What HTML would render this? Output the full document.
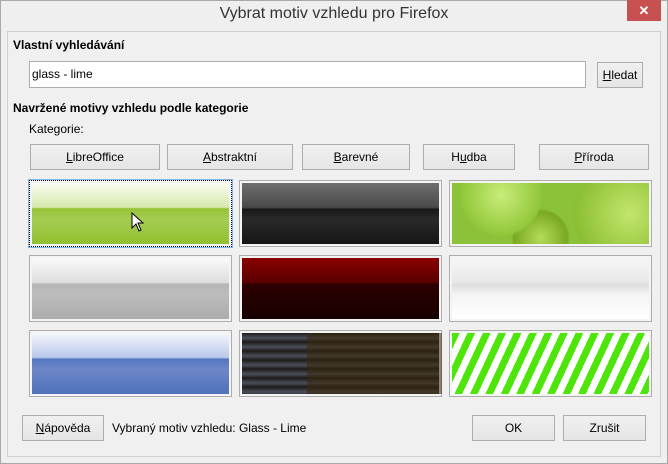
<!DOCTYPE html>
<html><head><meta charset="utf-8"><style>
*{margin:0;padding:0;box-sizing:border-box}
body{width:668px;height:464px;background:#f0f0f0;font-family:"Segoe UI","Liberation Sans",sans-serif;font-size:12px;color:#000;position:relative;overflow:hidden}
.win{position:absolute;left:0;top:0;width:668px;height:464px;border:1px solid #a8a8a8;background:#efefef}
.title{position:absolute;left:0;top:5px;width:668px;text-align:center;font-size:16px;color:#333}
.close{position:absolute;left:627px;top:0;width:34px;height:21px;background:#c75050;color:#fff;text-align:center;font-size:13px;line-height:21px;font-weight:bold}
.panel{position:absolute;left:7px;top:31px;width:654px;height:426px;border:1px solid #d0d0d0;background:#f0f0f0}
.a{position:absolute;white-space:nowrap}
.b{font-weight:bold}
.btn{position:absolute;border:1px solid #adadad;background:linear-gradient(#f0f0f0,#e5e5e5);text-align:center;line-height:24px;height:26px}
.inp{position:absolute;left:29px;top:61px;width:557px;height:27px;border:1px solid #abadb3;background:#fff;padding-left:2px;line-height:25px}
.t{position:absolute;width:203px;height:67px;border:1px solid #adadad;padding:2px;background:#f4f4f4}
.t div{width:100%;height:100%}
</style></head><body>
<div class="win"></div>
<div class="title">Vybrat motiv vzhledu pro Firefox</div>
<div class="close">✕</div>
<div class="panel"></div>
<div class="a b" style="left:13px;top:38px">Vlastní vyhledávání</div>
<div class="inp">glass - lime</div>
<div class="btn" style="left:597px;top:62px;width:46px"><u>H</u>ledat</div>
<div class="a b" style="left:13px;top:101px">Navržené motivy vzhledu podle kategorie</div>
<div class="a" style="left:29px;top:122px">Kategorie:</div>
<div class="btn" style="left:30px;top:144px;width:130px"><u>L</u>ibreOffice</div>
<div class="btn" style="left:167px;top:144px;width:126px"><u>A</u>bstraktní</div>
<div class="btn" style="left:302px;top:144px;width:108px"><u>B</u>arevné</div>
<div class="btn" style="left:423px;top:144px;width:92px">H<u>u</u>dba</div>
<div class="btn" style="left:539px;top:144px;width:110px"><u>P</u>říroda</div>

<div class="t" style="left:29px;top:180px;border:1px dotted #000;outline:1px solid #7eb4ea"><div style="background:linear-gradient(#fbfdf4,#d5e8a9 40%,#97c337 42%,#a4cd52 60%,#93bf2f)"></div></div>
<div class="t" style="left:239px;top:180px"><div style="background:linear-gradient(#6e6e6e,#4a4a4a 40%,#181818 43%,#2a2a2a 60%,#151515)"></div></div>
<div class="t" style="left:449px;top:180px"><div style="background:radial-gradient(circle at 25% 20%,#c9ec7a 0,#93c83a 25%,transparent 27%),radial-gradient(circle at 90% 50%,#c2e56c 0,#8cbf32 30%,transparent 32%),radial-gradient(circle at 45% 90%,#b5dc5a 0,#79a821 22%,transparent 24%),#8cc13a"></div></div>

<div class="t" style="left:29px;top:255px"><div style="background:linear-gradient(#fafafa,#dedede 40%,#b5b5b5 43%,#bcbcbc 60%,#acacac)"></div></div>
<div class="t" style="left:239px;top:255px"><div style="background:linear-gradient(#8a0000,#5a0000 40%,#2e0000 43%,#260000 60%,#170000)"></div></div>
<div class="t" style="left:449px;top:255px"><div style="background:linear-gradient(#f6f6f6,#e8e8e8 40%,#dcdcdc 43%,#f4f4f4 60%,#fff)"></div></div>

<div class="t" style="left:29px;top:330px"><div style="background:linear-gradient(#f4f6fc,#bac8ea 40%,#5676be 43%,#6d87c8 60%,#5071bd)"></div></div>
<div class="t" style="left:239px;top:330px"><div style="background:repeating-linear-gradient(#1c1c1c 0,#4a4f58 5px,#1c1c1c 9px),#222;position:relative"><div style="position:absolute;left:65px;top:0;width:135px;height:100%;background:rgba(60,40,10,.55)"></div></div></div>
<div class="t" style="left:449px;top:330px"><div style="background:repeating-linear-gradient(115deg,#4ee60a 0,#4ee60a 7px,#fff 7px,#fff 14px)"></div></div>

<div class="btn" style="left:22px;top:415px;width:82px"><u>N</u>ápověda</div>
<div class="a" style="left:112px;top:421px">Vybraný motiv vzhledu: Glass - Lime</div>
<div class="btn" style="left:472px;top:415px;width:83px">OK</div>
<div class="btn" style="left:563px;top:415px;width:83px">Zrušit</div>
<svg style="position:absolute;left:131px;top:212px" width="14" height="20" viewBox="0 0 14 20"><path d="M1 1 L1 16 L5 12 L8 19 L10 18 L7 11 L12 11 Z" fill="#fff" stroke="#000" stroke-width="1"/></svg>
</body></html>
